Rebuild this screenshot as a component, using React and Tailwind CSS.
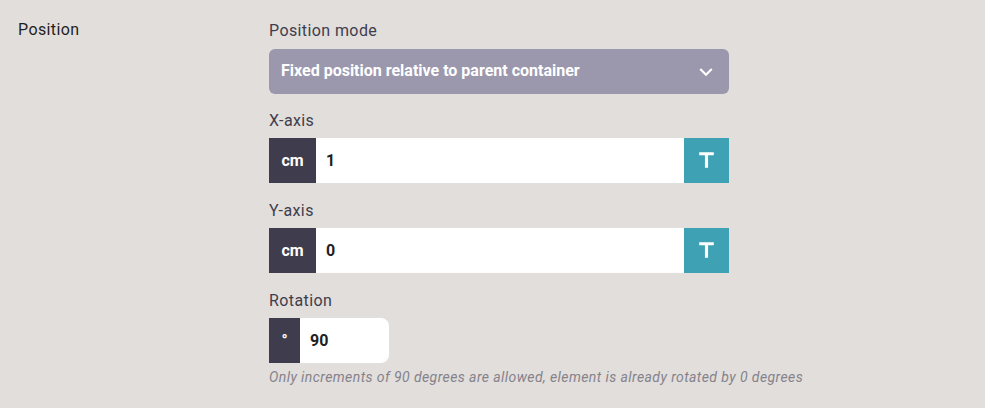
function TextIcon() {
  return (
    <svg viewBox="0 0 24 24" className="size-[25px]" fill="currentColor" aria-hidden="true">
      <path d="M5 4v3h5.500v12h3V7H19V4z" />
    </svg>
  );
}

function ArrowIcon() {
  return (
    <svg viewBox="0 0 24 24" className="pointer-events-none absolute top-2.5 right-2.5 size-[26px] text-white" fill="currentColor" aria-hidden="true">
      <path d="M7.410 8.590L12 13.170l4.590-4.580L18 10l-6 6-6-6z" />
    </svg>
  );
}

function AxisField({ id, label, value }) {
  return (
    <div className="mb-3">
      <label htmlFor={id} className="block h-[33px] leading-8 tracking-wide">{label}</label>
      <div className="flex h-[45px] text-[#1f1e24]">
        <span className="flex w-[47px] shrink-0 items-center justify-center bg-[#3f3d4d] font-bold text-white">cm</span>
        <input id={id} defaultValue={value} className="min-w-0 flex-1 bg-white px-2.5 font-bold outline-none" />
        <button type="button" aria-label={`${label} variable`} className="flex w-[45px] shrink-0 items-center justify-center bg-[#3ea2b4] text-white">
          <TextIcon />
        </button>
      </div>
    </div>
  );
}

export default function App() {
  return (
    <main className="flex min-h-screen bg-[#e1dedb] px-[18px] pt-[14px] font-[Roboto,sans-serif] text-base text-[#3f3d4d]">
      <h2 className="w-[251px] shrink-0 leading-8 tracking-wide text-[#1f1e24]">Position</h2>
      <div className="min-w-0 flex-1">
        <div className="max-w-[460px]">
          <label htmlFor="mode" className="block h-[35px] leading-[34px] tracking-wide">Position mode</label>
          <div className="relative mb-[11px]">
            <select id="mode" className="h-[45px] w-full appearance-none rounded-md bg-[#9b98ae] px-3 pb-0.5 font-bold text-white outline-none">
              <option>Fixed position relative to parent container</option>
            </select>
            <ArrowIcon />
          </div>
          <AxisField id="x" label="X-axis" value="1" />
          <AxisField id="y" label="Y-axis" value="0" />
          <label htmlFor="rotation" className="block h-[33px] leading-8 tracking-wide">Rotation</label>
          <div className="flex h-[45px] w-[120px] text-[#1f1e24]">
            <span className="flex w-[31px] shrink-0 items-center justify-center bg-[#3f3d4d] font-bold text-white">°</span>
            <input id="rotation" defaultValue="90" className="min-w-0 flex-1 rounded-r-lg bg-white px-2.5 font-bold outline-none" />
          </div>
        </div>
        <p className="mt-1 text-sm tracking-[0.03em] text-[#85828c] italic">Only increments of 90 degrees are allowed, element is already rotated by 0 degrees</p>
      </div>
    </main>
  );
}
